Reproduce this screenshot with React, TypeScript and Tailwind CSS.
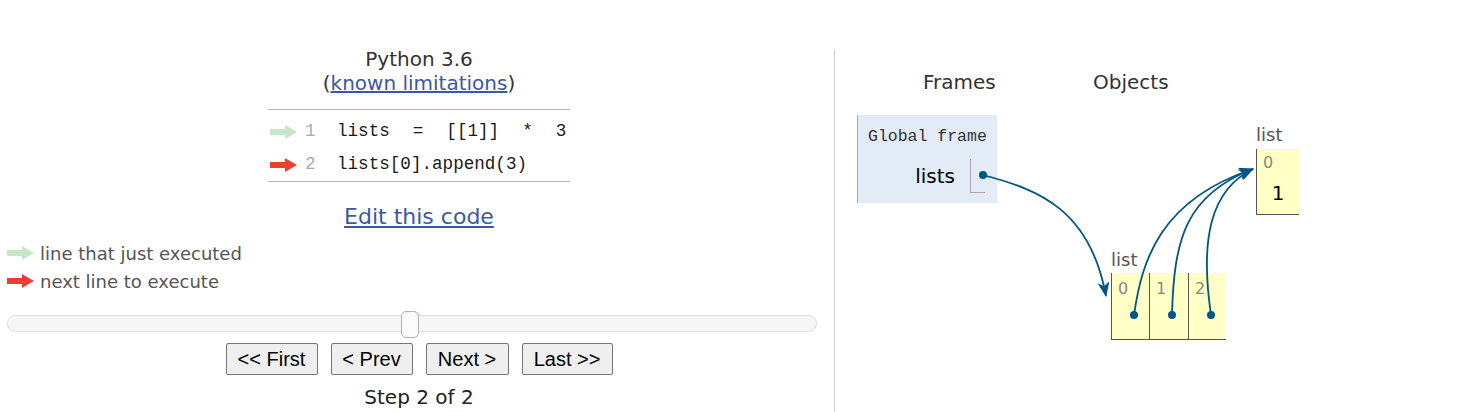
import React from "react";

const sans = { fontFamily: '"DejaVu Sans", Verdana, sans-serif' };
const mono = { fontFamily: '"Liberation Mono", "DejaVu Sans Mono", monospace' };

function StepArrow({ color }: { color: string }) {
  return (
    <svg width="27" height="14" viewBox="0 0 27 14" className="shrink-0">
      <rect x="0" y="4" width="17" height="6" fill={color} />
      <polygon points="15,0 27,7 15,14" fill={color} />
    </svg>
  );
}

function CodeLine({ num, arrow, tokens }: { num: number; arrow: string; tokens: string[] }) {
  return (
    <div className="flex items-center h-[33px]">
      <div className="ml-[2px]">
        <StepArrow color={arrow} />
      </div>
      <span className="w-[40px] pl-[8px] text-[17.6px] text-[#aaaaaa]" style={mono}>
        {num}
      </span>
      <span className="flex gap-[23px] text-[17.6px] text-[#1a1a1a] whitespace-pre" style={mono}>
        {tokens.map((t, i) => (
          <span key={i}>{t}</span>
        ))}
      </span>
    </div>
  );
}

function NavButton({ label, w }: { label: string; w: string }) {
  return (
    <button
      className={`${w} h-[32px] bg-[#efefef] border border-[#767676] rounded-[2px] text-[20px] text-black leading-none`}
      style={{ fontFamily: '"Liberation Sans", Arial, sans-serif' }}
    >
      {label}
    </button>
  );
}

export default function App() {
  return (
    <div className="flex w-[1465px] h-[412px] bg-white overflow-hidden" style={sans}>
      {/* left: code + controls */}
      <div className="w-[834px] shrink-0 pl-[4px]">
        <div className="w-[830px] flex flex-col items-center pt-[47px]">
          <div className="text-[20px] leading-[24px] text-[#333]">Python 3.6</div>
          <div className="text-[20px] leading-[24px] text-[#333]">
            (<a className="text-[#3d58a2] underline">known limitations</a>)
          </div>

          <div className="mt-[14px] w-[302px] border-t border-b border-[#b5b5b5] pt-[5px]">
            <CodeLine num={1} arrow="#c5e7c8" tokens={["lists", "=", "[[1]]", "*", "3"]} />
            <CodeLine num={2} arrow="#e93f34" tokens={["lists[0].append(3)"]} />
          </div>

          <a className="mt-[22px] text-[22px] leading-[26px] text-[#3d58a2] underline">Edit this code</a>

          <div className="self-start ml-[3px] mt-[9px] text-[18px] text-[#555]">
            <div className="flex items-center gap-[6px] h-[28px]">
              <StepArrow color="#c5e7c8" />
              <span>line that just executed</span>
            </div>
            <div className="flex items-center gap-[6px] h-[28px]">
              <StepArrow color="#e93f34" />
              <span>next line to execute</span>
            </div>
          </div>

          <div className="self-start ml-[3px] mt-[15px] h-[27px] flex items-center">
            <div className="relative w-[810px] h-[17px] rounded-full border border-[#dddddd] bg-[#f7f7f7]">
              <div className="absolute left-[393px] top-[-5px] w-[18px] h-[27px] rounded-[5px] border border-[#b0b0b0] bg-[#fbfbfb]" />
            </div>
          </div>

          <div className="mt-[6px] flex gap-[13px]">
            <NavButton label="<< First" w="w-[92px]" />
            <NavButton label="< Prev" w="w-[82px]" />
            <NavButton label="Next >" w="w-[83px]" />
            <NavButton label="Last >>" w="w-[91px]" />
          </div>

          <div className="mt-[10px] text-[20px] leading-[24px] text-[#222]">Step 2 of 2</div>
        </div>
      </div>

      {/* right: frames + objects */}
      <div className="relative flex-1 mt-[50px] border-l border-[#cccccc]">
        <div className="flex pt-[20px] pl-[88px] text-[20px] leading-[24px] text-[#333]">
          <span className="w-[170px]">Frames</span>
          <span>Objects</span>
        </div>

        <div className="ml-[22px] mt-[21px] w-[140px] h-[88px] bg-[#e2ebf6] border-l border-[#aaaaaa] pt-[12px]">
          <div className="pl-[10px] text-[16.5px] leading-[20px] text-[#333]" style={mono}>
            Global frame
          </div>
          <div className="mt-[12px] flex justify-end items-center pr-[12px]">
            <span className="text-[20px] text-black mr-[15px]">lists</span>
            <div className="w-[15px] h-[34px] border-l border-b border-[#aaaaaa]" />
          </div>
        </div>

        {/* list [ref, ref, ref] */}
        <div className="absolute left-[276px] top-[199px]">
          <div className="text-[18px] leading-[22px] text-[#555]">list</div>
          <div className="mt-[2px] flex h-[67px] border-b border-[#555]">
            {["0", "1", "2"].map((i, k) => (
              <div
                key={i}
                className={`${k === 1 ? "w-[39px]" : "w-[38px]"} h-full bg-[#ffffc6] border-l border-[#555] pl-[6px] pt-[6px]`}
              >
                <div className="text-[16px] leading-[20px] text-[#888]">{i}</div>
              </div>
            ))}
          </div>
        </div>

        {/* list [1] */}
        <div className="absolute left-[421px] top-[74px]">
          <div className="text-[18px] leading-[22px] text-[#555]">list</div>
          <div className="mt-[3px] w-[43px] h-[66px] bg-[#ffffc6] border-l border-b border-[#555] pt-[4px]">
            <div className="pl-[6px] text-[16px] leading-[20px] text-[#888]">0</div>
            <div className="mt-[8px] text-center text-[20px] leading-[24px] text-black">1</div>
          </div>
        </div>

        {/* pointers */}
        <svg className="absolute left-0 top-0 pointer-events-none" width="630" height="362">
          <defs>
            <marker
              id="head"
              markerUnits="userSpaceOnUse"
              markerWidth="15"
              markerHeight="12"
              refX="14"
              refY="6"
              orient="auto"
            >
              <path d="M0,0 L15,6 L0,12 L4,6 z" fill="#005583" />
            </marker>
          </defs>
          <g transform="translate(-835,-50)" stroke="#005583" strokeWidth="1.8" fill="none">
            <path d="M983,175 C1040,190 1090,210 1106,296" markerEnd="url(#head)" />
            <path d="M1134,315 C1142,260 1160,200 1253,169" markerEnd="url(#head)" />
            <path d="M1172,315 C1174,240 1185,195 1253,169" markerEnd="url(#head)" />
            <path d="M1211,315 C1200,240 1210,190 1253,169" markerEnd="url(#head)" />
            <g fill="#005583" stroke="none">
              <circle cx="983" cy="175" r="4" />
              <circle cx="1134" cy="315" r="4" />
              <circle cx="1172" cy="315" r="4" />
              <circle cx="1211" cy="315" r="4" />
            </g>
          </g>
        </svg>
      </div>
    </div>
  );
}
